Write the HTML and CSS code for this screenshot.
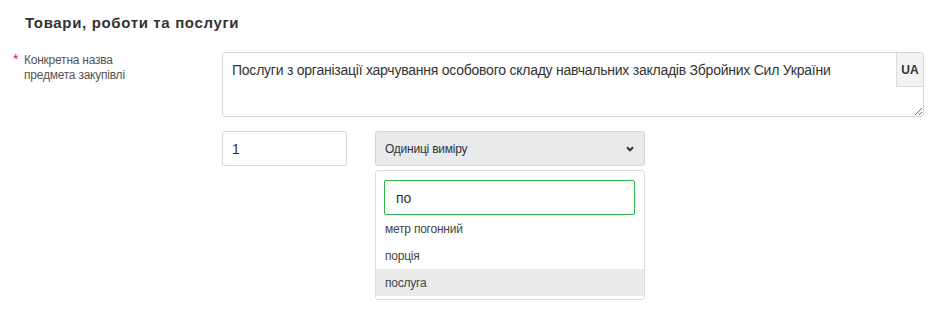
FILE: index.html
```html
<!DOCTYPE html>
<html lang="uk">
<head>
<meta charset="utf-8">
<title>Товари, роботи та послуги</title>
<link rel="stylesheet" href="styles.css">
</head>
<body>
<section class="panel">
  <h2 class="title">Товари, роботи та послуги</h2>
  <div class="form-row">
    <label class="label"><span class="req">*</span><span class="label-text">Конкретна назва<br>предмета закупівлі</span></label>
    <div class="field">
      <div class="ta-wrap">
        <textarea class="ta">Послуги з організації харчування особового складу навчальних закладів Збройних Сил України</textarea>
        <span class="lang">UA</span>
      </div>
      <div class="qty-row">
        <input class="qty" type="text" value="1">
        <div class="unit">
          <div class="select">
            <span>Одиниці виміру</span>
            <svg class="chev" width="8" height="6" viewBox="0 0 8 6"><path d="M1 1.3 L4 4.3 L7 1.3" fill="none" stroke="#333" stroke-width="2"/></svg>
          </div>
          <div class="dropdown">
            <div class="search-wrap"><input class="search" type="text" value="по"></div>
            <ul class="options">
              <li>метр погонний</li>
              <li>порція</li>
              <li class="active">послуга</li>
            </ul>
          </div>
        </div>
      </div>
    </div>
  </div>
</section>
</body>
</html>
```

FILE: styles.css
```css
* { box-sizing: border-box; }
body {
  margin: 0;
  background: #fff;
  font-family: "Liberation Sans", Arial, sans-serif;
  color: #333;
  letter-spacing: -0.23px;
}
.panel {
  padding: 14px 0 0 0;
}
.title {
  margin: 0 0 0 25px;
  font-size: 15px;
  font-weight: bold;
  letter-spacing: 0.65px;
  line-height: 17px;
  color: #333;
}
.form-row {
  display: flex;
  margin-top: 21px;
}
.label {
  width: 222px;
  flex: none;
  display: flex;
  padding-left: 13px;
  padding-top: 1px;
  font-size: 12px;
  line-height: 15px;
  color: #555;
}
.req {
  color: #e8133b;
  width: 11px;
  font-size: 14px;
  line-height: 13px;
}
.field {
  width: 702px;
}
.ta-wrap {
  position: relative;
}
.ta {
  display: block;
  width: 702px;
  height: 65px;
  border: 1px solid #d3d6da;
  border-radius: 3px;
  padding: 8px 40px 8px 9px;
  font-family: "Liberation Sans", Arial, sans-serif;
  font-size: 14px;
  letter-spacing: -0.24px;
  line-height: 18px;
  color: #333;
  resize: vertical;
  outline: none;
}
.lang {
  position: absolute;
  top: 1px;
  right: 1px;
  width: 27px;
  height: 34px;
  background: #f3f3f3;
  border-left: 1px solid #dcdcdc;
  border-bottom: 1px solid #dcdcdc;
  font-size: 12px;
  font-weight: bold;
  letter-spacing: 0;
  color: #333;
  display: flex;
  align-items: center;
  justify-content: center;
}
.qty-row {
  display: flex;
  gap: 28px;
  margin-top: 14px;
}
.qty {
  width: 125px;
  height: 35px;
  border: 1px solid #d3d6da;
  border-radius: 3px;
  padding: 0 9px;
  font-family: "Liberation Sans", Arial, sans-serif;
  font-size: 14px;
  color: #333;
  outline: none;
}
.unit {
  width: 270px;
}
.select {
  height: 35px;
  background: #e9eaec;
  border: 1px solid #d3d6da;
  border-radius: 3px;
  display: flex;
  align-items: center;
  justify-content: space-between;
  padding: 0 10px 0 9px;
  font-size: 12px;
  color: #333;
}
.chev { display: block; margin-top: 1px; }
.dropdown {
  margin-top: 4px;
  border: 1px solid #d8dbdf;
  border-radius: 3px;
  padding: 9px 0 3px 0;
  background: #fff;
}
.search-wrap {
  padding: 0 8px;
}
.search {
  width: 251px;
  height: 35px;
  border: 1px solid #2fb34a;
  border-radius: 2px;
  padding: 0 11px;
  font-family: "Liberation Sans", Arial, sans-serif;
  font-size: 14px;
  color: #333;
  outline: none;
  display: block;
}
.options {
  list-style: none;
  margin: 0;
  padding: 0;
}
.options li {
  height: 27px;
  line-height: 28px;
  padding-left: 9px;
  font-size: 12px;
  color: #444;
}
.options li.active {
  background: #ebebec;
}
```
